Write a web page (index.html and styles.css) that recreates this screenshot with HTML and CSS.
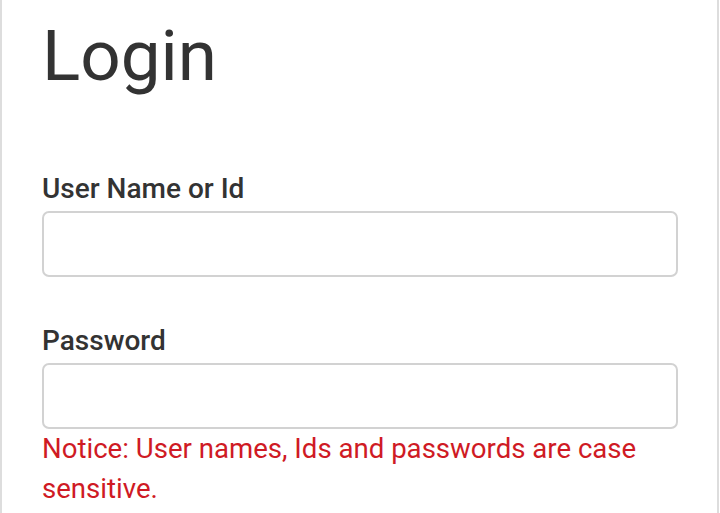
FILE: index.html
```html
<!DOCTYPE html>
<html>
<head>
<meta charset="utf-8">
<link rel="stylesheet" href="styles.css">
</head>
<body>
<div class="page">
  <h1 class="title">Login</h1>
  <form class="form">
    <div class="field">
      <label class="label" for="user">User Name or Id</label>
      <input class="input" id="user" type="text">
    </div>
    <div class="field">
      <label class="label" for="pass">Password</label>
      <input class="input" id="pass" type="password">
      <p class="notice">Notice: User names, Ids and passwords are case sensitive.</p>
    </div>
  </form>
</div>
</body>
</html>
```
FILE: styles.css
```css
html, body {
  margin: 0;
  padding: 0;
  background: #fff;
}
body {
  font-family: Roboto, "Noto Sans", sans-serif;
  color: #333;
}
.page {
  box-sizing: border-box;
  width: 719px;
  height: 513px;
  border-left: 2px solid #ddd;
  border-right: 2px solid #ddd;
  padding: 0 40px 0 40px;
  overflow: hidden;
}
.title {
  margin: 0;
  padding-top: 13px;
  font-size: 71px;
  font-weight: 400;
  line-height: 86px;
  color: #333;
}
.form {
  margin-top: 74px;
}
.field {
  display: flex;
  flex-direction: column;
}
.field + .field {
  margin-top: 48px;
}
.label {
  font-size: 28px;
  font-weight: 500;
  line-height: 32px;
  margin-bottom: 6px;
}
.input {
  box-sizing: border-box;
  width: 636px;
  height: 66px;
  border: 2px solid #d2d2d2;
  border-radius: 7px;
  background: #fff;
  margin: 0;
}
.notice {
  margin: 0;
  font-size: 27.6px;
  line-height: 40px;
  color: #cf1a24;
  width: 630px;
}
```
